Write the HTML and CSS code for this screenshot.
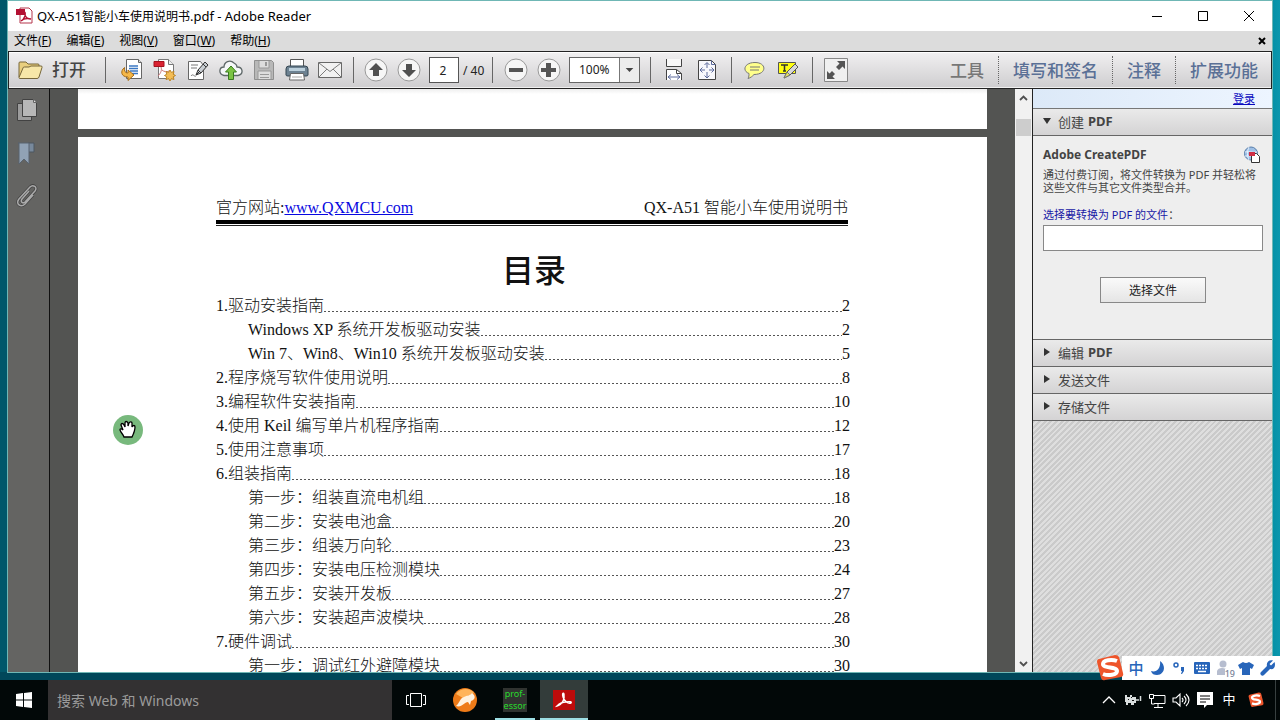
FILE: index.html
```html
<!DOCTYPE html>
<html lang="zh-CN">
<head>
<meta charset="utf-8">
<title>QX-A51智能小车使用说明书.pdf - Adobe Reader</title>
<link rel="stylesheet" href="styles.css">
</head>
<body>
<div class="desktop">
  <div class="window">
    <header class="titlebar">
      <svg class="app-icon" width="18" height="18" viewBox="0 0 18 18"><path d="M4 1h9l3 3v12H4z" fill="#fff" stroke="#b5364c"/><path d="M0 2h9v6H0z" fill="#b31032"/><path d="M5 14c4-3 5-6 4-9M9 8c1 3 3 4 6 4M5 14c2-2 6-3 10-2" fill="none" stroke="#b31032" stroke-width="1.3"/></svg>
      <h1 class="title">QX-A51<span>智能小车使用说明书</span>.pdf - Adobe Reader</h1>
      <div class="window-controls">
        <button aria-label="最小化"><svg width="12" height="12" viewBox="0 0 12 12"><path d="M1 6.500h10" stroke="#000"/></svg></button>
        <button aria-label="最大化"><svg width="12" height="12" viewBox="0 0 12 12"><path d="M1.500 1.500h9v9h-9z" fill="none" stroke="#000"/></svg></button>
        <button aria-label="关闭"><svg width="12" height="12" viewBox="0 0 12 12"><path d="M1 1l10 10M11 1L1 11" stroke="#000"/></svg></button>
      </div>
    </header>
    <nav class="menubar">
      <button>文件(<u>F</u>)</button><button>编辑(<u>E</u>)</button><button>视图(<u>V</u>)</button><button>窗口(<u>W</u>)</button><button>帮助(<u>H</u>)</button>
      <button class="close-doc" aria-label="关闭文档"><svg width="8" height="8" viewBox="0 0 8 8"><path d="M1 1l6 6M7 1L1 7" stroke="#000" stroke-width="2"/></svg></button>
    </nav>
    <div class="toolbar">
      <button class="open"><svg width="26" height="22" viewBox="0 0 26 22"><path d="M2 18V4q0-1 1-1h6l2 2h10q1 0 1 1v3" fill="#e9cf7e" stroke="#77673a"/><path d="M2 18.500L6 9q0-1 1.500-1H12l2-1h10q1.500 0 1 1.500L22 18q-.5 1.500-2 1.500H3q-1 0-1-1z" fill="#f7e7a8" stroke="#77673a"/></svg><span>打开</span></button>
      <span class="sep sep-wide"></span>
      <button class="tool" aria-label="转换文件"><svg viewBox="0 0 24 24"><path d="M6.500 1.500h12l3 3v16h-15z" fill="#fff" stroke="#666"/><path d="M18.500 1.500v3h3" fill="#ddd" stroke="#666"/><path d="M9 8h9M9 10.500h9M10 13h8M12 15.500h6" stroke="#3b78c4" stroke-width="1.300"/><path d="M4.500 9.500C0 13 1 19 8 19v3.500l6-5.500-6-5v3c-3 0-4-2-3.500-5.500z" fill="#f5b748" stroke="#a66c17"/></svg></button>
      <button class="tool" aria-label="创建 PDF"><svg viewBox="0 0 24 24"><path d="M5.500 1.500h10l5 5v14h-15z" fill="#fff" stroke="#777"/><path d="M15.500 1.500v5h5" fill="#eee" stroke="#777"/><path d="M1 3.500h10v5H1z" fill="#d92231" stroke="#a5131e"/><path d="M8 9c1 3 0 6-3 9M9 12c2 2 5 2 7 1" fill="none" stroke="#c77" /><path d="M17 12l1.300 2.300 2.700-.8-.8 2.700 2.300 1.300-2.300 1.300.8 2.700-2.700-.8L17 23l-1.300-2.300-2.700.8.8-2.700-2.300-1.300 2.300-1.300-.8-2.700 2.700.8z" fill="#f4bd54" stroke="#bd8525"/></svg></button>
      <button class="tool" aria-label="签名"><svg viewBox="0 0 24 24"><path d="M2.500 3.500h12l3 4v14h-15z" fill="#fff" stroke="#666"/><path d="M5 7h7M5 10h6M5 18c2-3 3 1 5 0" fill="none" stroke="#777"/><path d="M10 17l2-5 7-8 3 3-7 8z" fill="#c9ced3" stroke="#333"/><path d="M12 12l3 3M17 6l3 3M10 17l3-3" stroke="#333"/></svg></button>
      <button class="tool" aria-label="上传"><svg viewBox="0 0 24 24"><path d="M5 17.500C-1 16 0 9 5 9c0-5 6-8 10-4 2 1 3 3 3 4 6 0 7 7 1 8.500z" fill="#f5f7f8" stroke="#5f6869" stroke-width="1.300"/><path d="M12 8l5.500 6H14.500v7.500H9.500v-7.500H6.500z" fill="#7bc344" stroke="#397a1f"/></svg></button>
      <button class="tool" aria-label="保存" disabled><svg viewBox="0 0 24 24"><path d="M2.500 2.500h17l2 2v17h-19z" fill="#b8b8b8" stroke="#8f8f8f"/><path d="M7 3v7h10V3M6 21v-8h13v8" fill="#ddd" stroke="#999"/><path d="M13 4h2v4h-2zM8 16h9v1H8zM8 19h9v1H8z" fill="#999"/></svg></button>
      <button class="tool" aria-label="打印"><svg viewBox="0 0 24 24"><path d="M5.500 1.500h13v9h-13z" fill="#fff" stroke="#555"/><path d="M4 8h16q3 0 3 3v6q0 1-2 1H3q-2 0-2-1v-6q0-3 3-3z" fill="#6d8292" stroke="#344652"/><path d="M4 10h16v3H4z" fill="#bcd0dc"/><path d="M5.500 15.500h13l1 6.500h-15z" fill="#fff" stroke="#666"/><path d="M7 19h10" stroke="#aaa"/></svg></button>
      <button class="tool" aria-label="邮件"><svg viewBox="0 0 24 24"><path d="M.5 4.500h23v15H.5z" fill="#f2f2f2" stroke="#686868"/><path d="M1 5l11 8.500L23 5M1 19l8-8M23 19l-8-8" fill="none" stroke="#7c7c7c"/></svg></button>
      <span class="sep sep-a"></span>
      <button class="tool" aria-label="上一页"><svg viewBox="0 0 24 24"><circle cx="12" cy="12" r="11" fill="#f6f6f6" stroke="#999"/><path d="M12 5l7 7h-4v6H9v-6H5z" fill="#505050"/></svg></button>
      <button class="tool" aria-label="下一页"><svg viewBox="0 0 24 24"><circle cx="12" cy="12" r="11" fill="#f6f6f6" stroke="#999"/><path d="M12 19l7-7h-4V6H9v6H5z" fill="#505050"/></svg></button>
      <label class="page-field"><input type="text" value="2" aria-label="页码">/ 40</label>
      <span class="sep sep-b"></span>
      <button class="tool" aria-label="缩小"><svg viewBox="0 0 24 24"><circle cx="12" cy="12" r="11" fill="#f6f6f6" stroke="#999"/><path d="M5 10h14v4H5z" fill="#555"/></svg></button>
      <button class="tool" aria-label="放大"><svg viewBox="0 0 24 24"><circle cx="12" cy="12" r="11" fill="#f6f6f6" stroke="#999"/><path d="M9 5h5v5h5v4h-5v5H9v-5H4v-4h5z" fill="#555"/></svg></button>
      <div class="zoom"><select aria-label="缩放比例"><option>100%</option></select><svg viewBox="0 0 20 24"><path d="M6 10h8l-4 4z" fill="#444"/></svg></div>
      <span class="sep sep-c"></span>
      <button class="tool" aria-label="适合宽度"><svg viewBox="0 0 24 24"><path d="M4.500 1v7.500h15V1" fill="#f8f8f8" stroke="#444"/><path d="M4.500 22V11.500h10l5 4V22z" fill="#fff"/><path d="M4.500 22V11.500h10l5 4V22M14.500 11.500v4h5" fill="none" stroke="#444"/><path d="M6 19h12M9 16.500L6 19l3 2.500M15 16.500l3 2.500-3 2.500" fill="none" stroke="#5c6a9c"/></svg></button>
      <button class="tool" aria-label="适合页面"><svg viewBox="0 0 24 24"><path d="M3.500 2.500h13l4 4v15h-17z" fill="#f8f8fc" stroke="#444"/><path d="M16.500 2.500v4h4M12 5v5M12 14v5M5 12h5M14 12h5M9.500 7L12 4.500 14.500 7M9.500 17.500L12 20l2.500-2.500M7.500 9.500L5 12l2.500 2.500M16.500 9.500L19 12l-2.500 2.500" fill="none" stroke="#5c6a9c"/></svg></button>
      <span class="sep sep-c"></span>
      <button class="tool" aria-label="添加附注"><svg viewBox="0 0 24 24"><path d="M12 4.500c12 0 12 12-1 12-2 2-3 3-6 4 1-2 1-3 1-5C-1 13 1 4.500 12 4.500z" fill="#ffff8c" stroke="#777"/><path d="M7 9h10M7 12h9" stroke="#777"/></svg></button>
      <button class="tool" aria-label="高亮文本"><svg viewBox="0 0 24 24"><path d="M2.500 4.500h17v11h-17z" fill="#ffff12" stroke="#555"/><path d="M5 7h7M8.500 7v6M7 13h3" stroke="#333" stroke-width="1.500"/><path d="M8 20l3-6 8-8 3 3-8 8z" fill="#d8d8d8" stroke="#555"/><path d="M8 20l3-6 3 3z" fill="#e7e764" stroke="#777"/></svg></button>
      <span class="sep sep-c"></span>
      <button class="tool" aria-label="阅读模式"><svg viewBox="0 0 24 24"><path d="M.5.500h23v23H.5z" fill="#f0f0f0" stroke="#888"/><path d="M13 3h8v8l-2.500-2.500-3.500 3.500-3-3 3.500-3.500zM11 21H3v-8l2.500 2.500L8 13l3 3-2.500 2.500z" fill="#555"/></svg></button>
      <div class="panes"><button class="active">工具</button><button>填写和签名</button><button>注释</button><button>扩展功能</button></div>
    </div>
    <div class="workspace">
      <aside class="rail">
        <button aria-label="页面缩略图"><svg width="22" height="24" viewBox="0 0 22 24"><path d="M1.500 5.500h14v17h-14z" fill="#9c9c9c" stroke="#424242"/><path d="M6.500 1.500h11l3 3v14h-14z" fill="#b7b7b7" stroke="#424242"/><path d="M17.500 1.500v3h3" fill="#ddd" stroke="#666"/></svg></button>
        <button aria-label="书签"><svg width="22" height="24" viewBox="0 0 22 24"><path d="M12 2h6v9h-6z" fill="#78899c" stroke="#4c5661"/><path d="M2 2h11v21l-5-5-5 5V2z" fill="#91a2b5" stroke="#58636e"/></svg></button>
        <button aria-label="附件"><svg width="22" height="24" viewBox="0 0 22 24"><path d="M13 7l-7 8c-2 3 1 5 3 3l10-11c3-4-2-7-5-4L3 15c-4 5 2 9 6 5l8-9" fill="none" stroke="#444" stroke-width="3"/><path d="M13 7l-7 8c-2 3 1 5 3 3l10-11c3-4-2-7-5-4L3 15c-4 5 2 9 6 5l8-9" fill="none" stroke="#aaa" stroke-width="1.500"/></svg></button>
      </aside>
      <main class="document">
        <section class="page page-previous"></section>
        <section class="page page-current">
          <div class="page-header"><span>官方网站:<a href="#">www.QXMCU.com</a></span><span>QX-A51 智能小车使用说明书</span></div>
          <h2>目录</h2>
          <ol class="toc">
            <li><span>1.驱动安装指南</span><i></i><b>2</b></li>
            <li class="sub"><span>Windows XP 系统开发板驱动安装</span><i></i><b>2</b></li>
            <li class="sub"><span>Win 7、Win8、Win10 系统开发板驱动安装</span><i></i><b>5</b></li>
            <li><span>2.程序烧写软件使用说明</span><i></i><b>8</b></li>
            <li><span>3.编程软件安装指南</span><i></i><b>10</b></li>
            <li><span>4.使用 Keil 编写单片机程序指南</span><i></i><b>12</b></li>
            <li><span>5.使用注意事项</span><i></i><b>17</b></li>
            <li><span>6.组装指南</span><i></i><b>18</b></li>
            <li class="sub"><span>第一步：组装直流电机组</span><i></i><b>18</b></li>
            <li class="sub"><span>第二步：安装电池盒</span><i></i><b>20</b></li>
            <li class="sub"><span>第三步：组装万向轮</span><i></i><b>23</b></li>
            <li class="sub"><span>第四步：安装电压检测模块</span><i></i><b>24</b></li>
            <li class="sub"><span>第五步：安装开发板</span><i></i><b>27</b></li>
            <li class="sub"><span>第六步：安装超声波模块</span><i></i><b>28</b></li>
            <li><span>7.硬件调试</span><i></i><b>30</b></li>
            <li class="sub"><span>第一步：调试红外避障模块</span><i></i><b>30</b></li>
          </ol>
        </section>
        <svg class="cursor" width="30" height="30" viewBox="0 0 30 30"><circle cx="15" cy="15" r="15" fill="#78b97d"/><path d="M11 22c-1-3-3-4-4-7 0-2 2-1 3 0L8 10c0-2 2-2 3 0l1 2V8c0-2 2-2 3 0v3l1-3c1-2 3-1 3 0v4c1-2 3-2 3 0 0 4-1 6-3 10z" fill="#fff" stroke="#000" stroke-width="1.300"/></svg>
      </main>
      <div class="scrollbar">
        <svg width="17" height="18" viewBox="0 0 17 18"><path d="M5 11l3.500-3.500L12 11" fill="none" stroke="#505050" stroke-width="1.800"/></svg>
        <span class="thumb"></span>
        <svg class="down" width="17" height="18" viewBox="0 0 17 18"><path d="M5 8l3.500 3.500L12 8" fill="none" stroke="#505050" stroke-width="1.800"/></svg>
      </div>
      <aside class="panel">
        <div class="login"><a href="#">登录</a></div>
        <button class="section-head"><svg viewBox="0 0 10 10"><path d="M1 2h8L5 8z"/></svg>创建 <b>PDF</b></button>
        <div class="create">
          <div class="create-title"><h3>Adobe CreatePDF</h3><svg width="18" height="18" viewBox="0 0 18 18"><circle cx="8" cy="7.500" r="6.500" fill="#9ebfe5" stroke="#557ca9"/><path d="M2 6c4-1 7 1 12 0M2 10h10M6 1c-2 4-2 9 0 13" fill="none" stroke="#e7f2ff"/><path d="M8.500 7.500h5l3 3v6h-8z" fill="#fff" stroke="#333"/><path d="M6 6h6v4H6z" fill="#cf2d45"/></svg></div>
          <p>通过付费订阅，将文件转换为 PDF 并轻松将<br>这些文件与其它文件类型合并。</p>
          <label for="file"><span>选择要转换为 PDF 的文件</span>：</label>
          <input id="file" type="text">
          <button class="choose">选择文件</button>
        </div>
        <button class="section-head"><svg viewBox="0 0 10 10"><path d="M2 1v8l6-4z"/></svg>编辑 <b>PDF</b></button>
        <button class="section-head"><svg viewBox="0 0 10 10"><path d="M2 1v8l6-4z"/></svg>发送文件</button>
        <button class="section-head"><svg viewBox="0 0 10 10"><path d="M2 1v8l6-4z"/></svg>存储文件</button>
        <div class="hatch"></div>
      </aside>
    </div>
  </div>
  <div class="ime">
    <svg class="ime-logo" width="28" height="28" viewBox="0 0 28 28"><path d="M3 5q-2 0-2 3l4 16q1 3 4 2l16-3q3-1 2-4L23 3q-1-2-4-2z" fill="#ee552b"/><path d="M21 7c-5-2-14-1-14 3 0 5 14 2 14 7 0 4-9 5-14 3" fill="none" stroke="#fff" stroke-width="4"/></svg>
    <span>中</span>
    <span><svg viewBox="0 0 16 16"><path d="M10 1c7 5 4 14-3 14-3 0-5-1-6-4 6 2 10-3 9-10z" fill="#2765ba"/></svg></span>
    <span><svg viewBox="0 0 16 16"><circle cx="4" cy="5" r="2" fill="none" stroke="#2765ba" stroke-width="1.500"/><path d="M9 7h3v4l-2 3H9l1-3H9z" fill="#2765ba"/></svg></span>
    <span><svg viewBox="0 0 16 16"><rect y="2" width="16" height="12" rx="1" fill="#2765ba"/><path d="M2 5.500h12M2 8.500h12" stroke="#fff" stroke-width="1.500" stroke-dasharray="2 1"/><path d="M4 11.500h8" stroke="#fff" stroke-width="1.500"/></svg></span>
    <span class="user"><svg viewBox="0 0 16 16"><circle cx="7" cy="4" r="3.500" fill="#b6bdcf"/><path d="M1 15v-4q1-3 5-3t6 3v4z" fill="#b6bdcf"/></svg><small>19</small></span>
    <span><svg viewBox="0 0 16 16"><path d="M5 2q3 2 6 0l5 3-2 4-2-1v7H4V8L2 9 0 5z" fill="#2765ba"/></svg></span>
    <span><svg viewBox="0 0 16 16"><path d="M14.500 2L11 5.500 9.500 4 13 .5c-4-1-7 2-6 5.500l-6 6c-2 2 1 5 3 3l6-6c4 1 6-3 4.500-7z" fill="#2765ba"/></svg></span>
  </div>
</div>
<footer class="taskbar">
  <button class="start" aria-label="开始"><svg width="16" height="16" viewBox="0 0 16 16"><path d="M0 2l7-1v6.500H0zM8 1l8-1v7.500H8zM0 8.500h7V15l-7-1zM8 8.500h8V16l-8-1z" fill="#fff"/></svg></button>
  <input class="search" type="text" placeholder="搜索 Web 和 Windows" aria-label="搜索">
  <button class="task" aria-label="任务视图"><svg width="20" height="16" viewBox="0 0 20 16"><path d="M4.500 1.500h11v13h-11zM3 3.500H.5v9H3M17 3.500h2.500v9H17" fill="none" stroke="#fff"/></svg></button>
  <button class="task" aria-label="浏览器"><svg width="24" height="24" viewBox="0 0 24 24"><circle cx="12" cy="12" r="12" fill="#ee7b18"/><path d="M3 6c4-6 14-7 18-1L10 10z" fill="#ffb45a"/><path d="M3 18c4-3 3-7 8-9 3-2 6-1 8-4 5 4 2 7-1 8l-1 4-2-3c-4 0-6 6-12 4z" fill="#fff2df"/></svg></button>
  <button class="task running professor">prof-<br>essor</button>
  <button class="task running selected" aria-label="Adobe Reader"><svg width="22" height="20" viewBox="0 0 22 20"><path d="M0 0h22v20H0z" fill="#bd0b0b"/><path d="M4 16c5-1 8-7 7-12-1-2-2 0-1 3 1 4 5 7 8 6 1-1-1-2-5-1-3 0-6 1-9 4z" fill="none" stroke="#fff" stroke-width="1.400"/></svg></button>
  <div class="tray">
    <span><svg viewBox="0 0 20 20"><path d="M4 13l6-6 6 6" fill="none" stroke="#fff" stroke-width="1.300"/></svg></span>
    <span><svg viewBox="0 0 20 20"><path d="M2 5h2v2h3V5h2v2h4v6h-2v2H8v-2H5v2H3v-3H2z" fill="#d9dede"/><path d="M5 9h1v1H5zM9 10h2v1H9zM8 7h1v1H8z" fill="#111"/><path d="M13 10h3M17.500 6v5" stroke="#d9dede" stroke-width="1.500"/></svg></span>
    <span><svg viewBox="0 0 20 20"><path d="M6 5.500h12v8H7M11 14v3M7 17.500h9M2.500 4.500h4v4h-4zM4.500 9v5h3" fill="none" stroke="#fff"/></svg></span>
    <span><svg viewBox="0 0 20 20"><path d="M2 8h3l4-4v12l-4-4H2zM11 8q2 2 0 4M13 6q4 4 0 8M15 4q6 6 0 12" fill="none" stroke="#fff" stroke-width="1.100"/></svg></span>
    <span><svg viewBox="0 0 20 20"><path d="M2 2h16v13h-6l-3 3v-3H2z" fill="#fff"/><path d="M5 6h10M5 9h10M5 12h6" stroke="#000"/></svg></span>
    <span class="lang">中</span>
    <span class="sogou"><svg viewBox="0 0 28 28"><path d="M3 5q-2 0-2 3l4 16q1 3 4 2l16-3q3-1 2-4L23 3q-1-2-4-2z" fill="#ee552b"/><path d="M21 7c-5-2-14-1-14 3 0 5 14 2 14 7 0 4-9 5-14 3" fill="none" stroke="#fff" stroke-width="4"/></svg></span>
  </div>
</footer>
</body>
</html>
```
FILE: styles.css
```css
* { box-sizing: border-box; }
body {
  margin: 0;
  height: 100vh;
  display: flex;
  flex-direction: column;
  overflow: hidden;
  font-family: "Noto Sans", "Noto Sans CJK SC", sans-serif;
  font-size: 12px;
  color: #000;
}
button, input, select { font: inherit; color: inherit; margin: 0; padding: 0; border: 0; background: none; border-radius: 0; }
h1, h2, h3, p, ol { margin: 0; padding: 0; }
svg { display: block; flex: none; }

.desktop {
  position: relative;
  flex: 1;
  min-height: 0;
  display: flex;
  padding: 1px 8px 8px;
  background: linear-gradient(90deg, #00576a, #005064 50%, #008ca2 99%, #0b97ad);
}
.desktop::before {
  content: "";
  position: absolute;
  inset: auto 0 0;
  height: 8px;
  background: #00475a;
}
.window { position: relative; flex: 1; min-width: 0; display: flex; flex-direction: column; background: #fff; box-shadow: 0 0 0 1px #6fb7b5; }

.titlebar { display: flex; align-items: center; height: 30px; padding-left: 8px; }
.title { flex: 1; margin-left: 3px; font-size: 13px; font-weight: 400; line-height: 20px; }
.title span { font-size: 12px; }
.window-controls { display: flex; }
.window-controls button { display: grid; place-items: center; width: 46px; height: 30px; }

.menubar { display: flex; align-items: center; gap: 15px; height: 20px; padding: 0 6px; background: #dcdcdc; }
.menubar button { line-height: 18px; }
.menubar .close-doc { margin-left: auto; }

.toolbar { display: flex; align-items: center; height: 38px; border: 1px solid #222; background: linear-gradient(#f1f0f1, #cecdcf); box-shadow: inset 0 1px #fff, inset 0 -1px #f0f0f0; }
.open { display: flex; align-items: center; gap: 9px; width: 96px; padding-left: 8px; font-size: 17px; color: #444; white-space: nowrap; }
.open span { padding-bottom: 3px; font-weight: 500; }
.tool { display: grid; place-items: center; width: 33px; height: 30px; flex: none; }
.tool svg { width: 24px; height: 24px; }
.sep { width: 1px; height: 26px; flex: none; background: #666; }
.sep-wide { margin-right: 9px; }
.sep-a { margin: 0 5px 0 7px; }
.sep-b { margin-right: 6px; }
.sep-c { margin: 0 6px 0 8px; }
.page-field { display: flex; align-items: center; gap: 4px; width: 67px; padding-left: 4px; color: #222; white-space: nowrap; }
.page-field input { width: 30px; height: 26px; padding-right: 2px; border: 1px solid #555; background: #fff; text-align: center; }
.zoom { display: grid; grid-template-columns: 49px 20px; width: 71px; height: 26px; margin: 0 2px 0 4px; border: 1px solid #666; background: #fff; }
.zoom select { grid-area: 1 / 1 / 2 / 3; appearance: none; padding: 0 0 2px 9px; color: #222; }
.zoom svg { grid-area: 1 / 2; width: 20px; height: 24px; border-left: 1px solid #777; background: #ececec; pointer-events: none; }
.panes { display: flex; margin-left: auto; }
.panes button { height: 28px; padding: 0 14px; border-left: 1px dotted #666; font-size: 17px; font-weight: 500; line-height: 25px; color: #5a7096; white-space: nowrap; }
.panes button:last-child { padding-right: 13px; }
.panes .active { border-left: 0; color: #777; }

.workspace { flex: 1; min-height: 0; display: flex; }
.rail { display: flex; flex-direction: column; align-items: center; gap: 19px; width: 42px; padding: 9px 3px 0 0; border-right: 1px solid #111; background: #646462; }
.document { position: relative; flex: 1; min-width: 0; overflow: hidden; padding: 0 28px; background: #535452; }
.page { background: #fff; }
.page-previous { height: 40px; margin-bottom: 8px; background: linear-gradient(#eee, #fff 5px); }
.page-current { min-height: 100%; padding: 59px 139px 0 138px; font: 300 16px/24px "Liberation Serif", "Noto Sans CJK SC", serif; color: #111; }
.page-header { display: flex; justify-content: space-between; height: 30px; border-bottom: 1px solid #222; white-space: nowrap; background: linear-gradient(#000, #000) 0 24px / 100% 4px no-repeat; }
.page-header a { color: #0808e0; }
.page-current h2 { height: 68px; padding: 5px 0 0 4px; font-size: 32px; line-height: 80px; font-weight: 500; text-align: center; }
.toc { list-style: none; margin-right: -2px; }
.toc li { display: flex; height: 24px; white-space: nowrap; }
.toc .sub { padding-left: 32px; }
.toc i { flex: 1; background: repeating-linear-gradient(90deg, #555 0 2px, transparent 2px 4px) 0 17px / 100% 1px no-repeat; }
.toc b { font-weight: 400; }
.cursor { position: absolute; left: 63px; top: 326px; }

.scrollbar { display: flex; flex-direction: column; width: 17px; background: #f1f1f1; }
.thumb { height: 17px; margin: 12px 1px 0; background: #cdcdcd; }
.scrollbar .down { margin-top: auto; }

.panel { display: flex; flex-direction: column; width: 240px; border-left: 1px solid #222; background: #eee; color: #444; }
.login { height: 20px; padding-right: 17px; background: linear-gradient(90deg, #dce9f8, #edf5ff); border-bottom: 1px solid #777; font-size: 11px; line-height: 20px; text-align: right; }
.login a { color: #0909be; }
.section-head { display: flex; align-items: center; gap: 4px; height: 27px; padding: 0 0 2px 9px; flex: none; border-bottom: 1px solid #666; background: linear-gradient(#eaeaea, #d4d3d4); font-size: 13px; text-align: left; }
.section-head svg { width: 10px; height: 10px; margin-right: 2px; fill: #333; }
.create { display: flex; flex-direction: column; height: 204px; padding: 9px 9px 0 10px; border-bottom: 1px solid #666; }
.create-title { display: flex; justify-content: space-between; align-items: center; height: 19px; padding-right: 2px; }
.create h3 { font-size: 12px; font-weight: 700; }
.create p { margin-top: 4px; font-size: 11px; line-height: 13px; white-space: nowrap; }
.create label { margin-top: 13px; font-size: 11px; line-height: 16px; }
.create label span { color: #1818a5; }
.create input { height: 26px; margin-top: 2px; padding: 0 4px; border: 1px solid #888; background: #fff; }
.choose { align-self: center; width: 106px; height: 26px; margin-top: 26px; border: 1px solid #888; background: linear-gradient(#fafafa, #e5e5e5); color: #222; }
.hatch { flex: 1; background: repeating-linear-gradient(135deg, #cacaca 0 2px, #dedede 2px 4px); }

.ime { position: absolute; right: 0; bottom: 0; display: flex; align-items: center; height: 24px; padding-right: 1px; background: linear-gradient(#fff, #fff) 26px 0 no-repeat; color: #2765ba; }
.ime-logo { margin-right: 1px; }
.ime span { display: grid; place-items: center; width: 22px; height: 24px; font-size: 15px; font-weight: 500; line-height: 22px; }
.ime svg:not(.ime-logo) { width: 16px; height: 16px; }
.ime .user { position: relative; }
.user small { position: absolute; right: 0; bottom: 1px; font-size: 9px; line-height: 10px; color: #777f97; background: #fff; }

.taskbar { display: flex; height: 40px; flex: none; background: #020808; color: #fff; }
.start { display: grid; place-items: center; width: 48px; }
.search { width: 344px; padding: 0 9px; background: #333132; font-size: 14px; }
.search::placeholder { color: #9b9b9b; opacity: 1; }
.task { display: grid; place-items: center; width: 48px; margin-right: 1px; }
.running { border-bottom: 2px solid #9ddfe4; padding-top: 2px; }
.selected { background: #333c3a; }
.professor { width: 40px; margin: 0 5px 0 5px; font-size: 9px; line-height: 12px; color: #28dc2c; background: linear-gradient(#303330, #303330) 50% 8px / 24px 24px no-repeat; }
.tray { display: flex; align-items: center; margin-left: auto; margin-right: 4px; padding-right: 4px; border-right: 1px solid #384040; }
.tray span { display: grid; place-items: center; width: 24px; font-size: 13px; }
.tray .lang { padding-bottom: 3px; }
.tray svg { width: 20px; height: 20px; }
.tray .sogou { width: 30px; }
.tray .sogou svg { width: 16px; height: 16px; }
```
